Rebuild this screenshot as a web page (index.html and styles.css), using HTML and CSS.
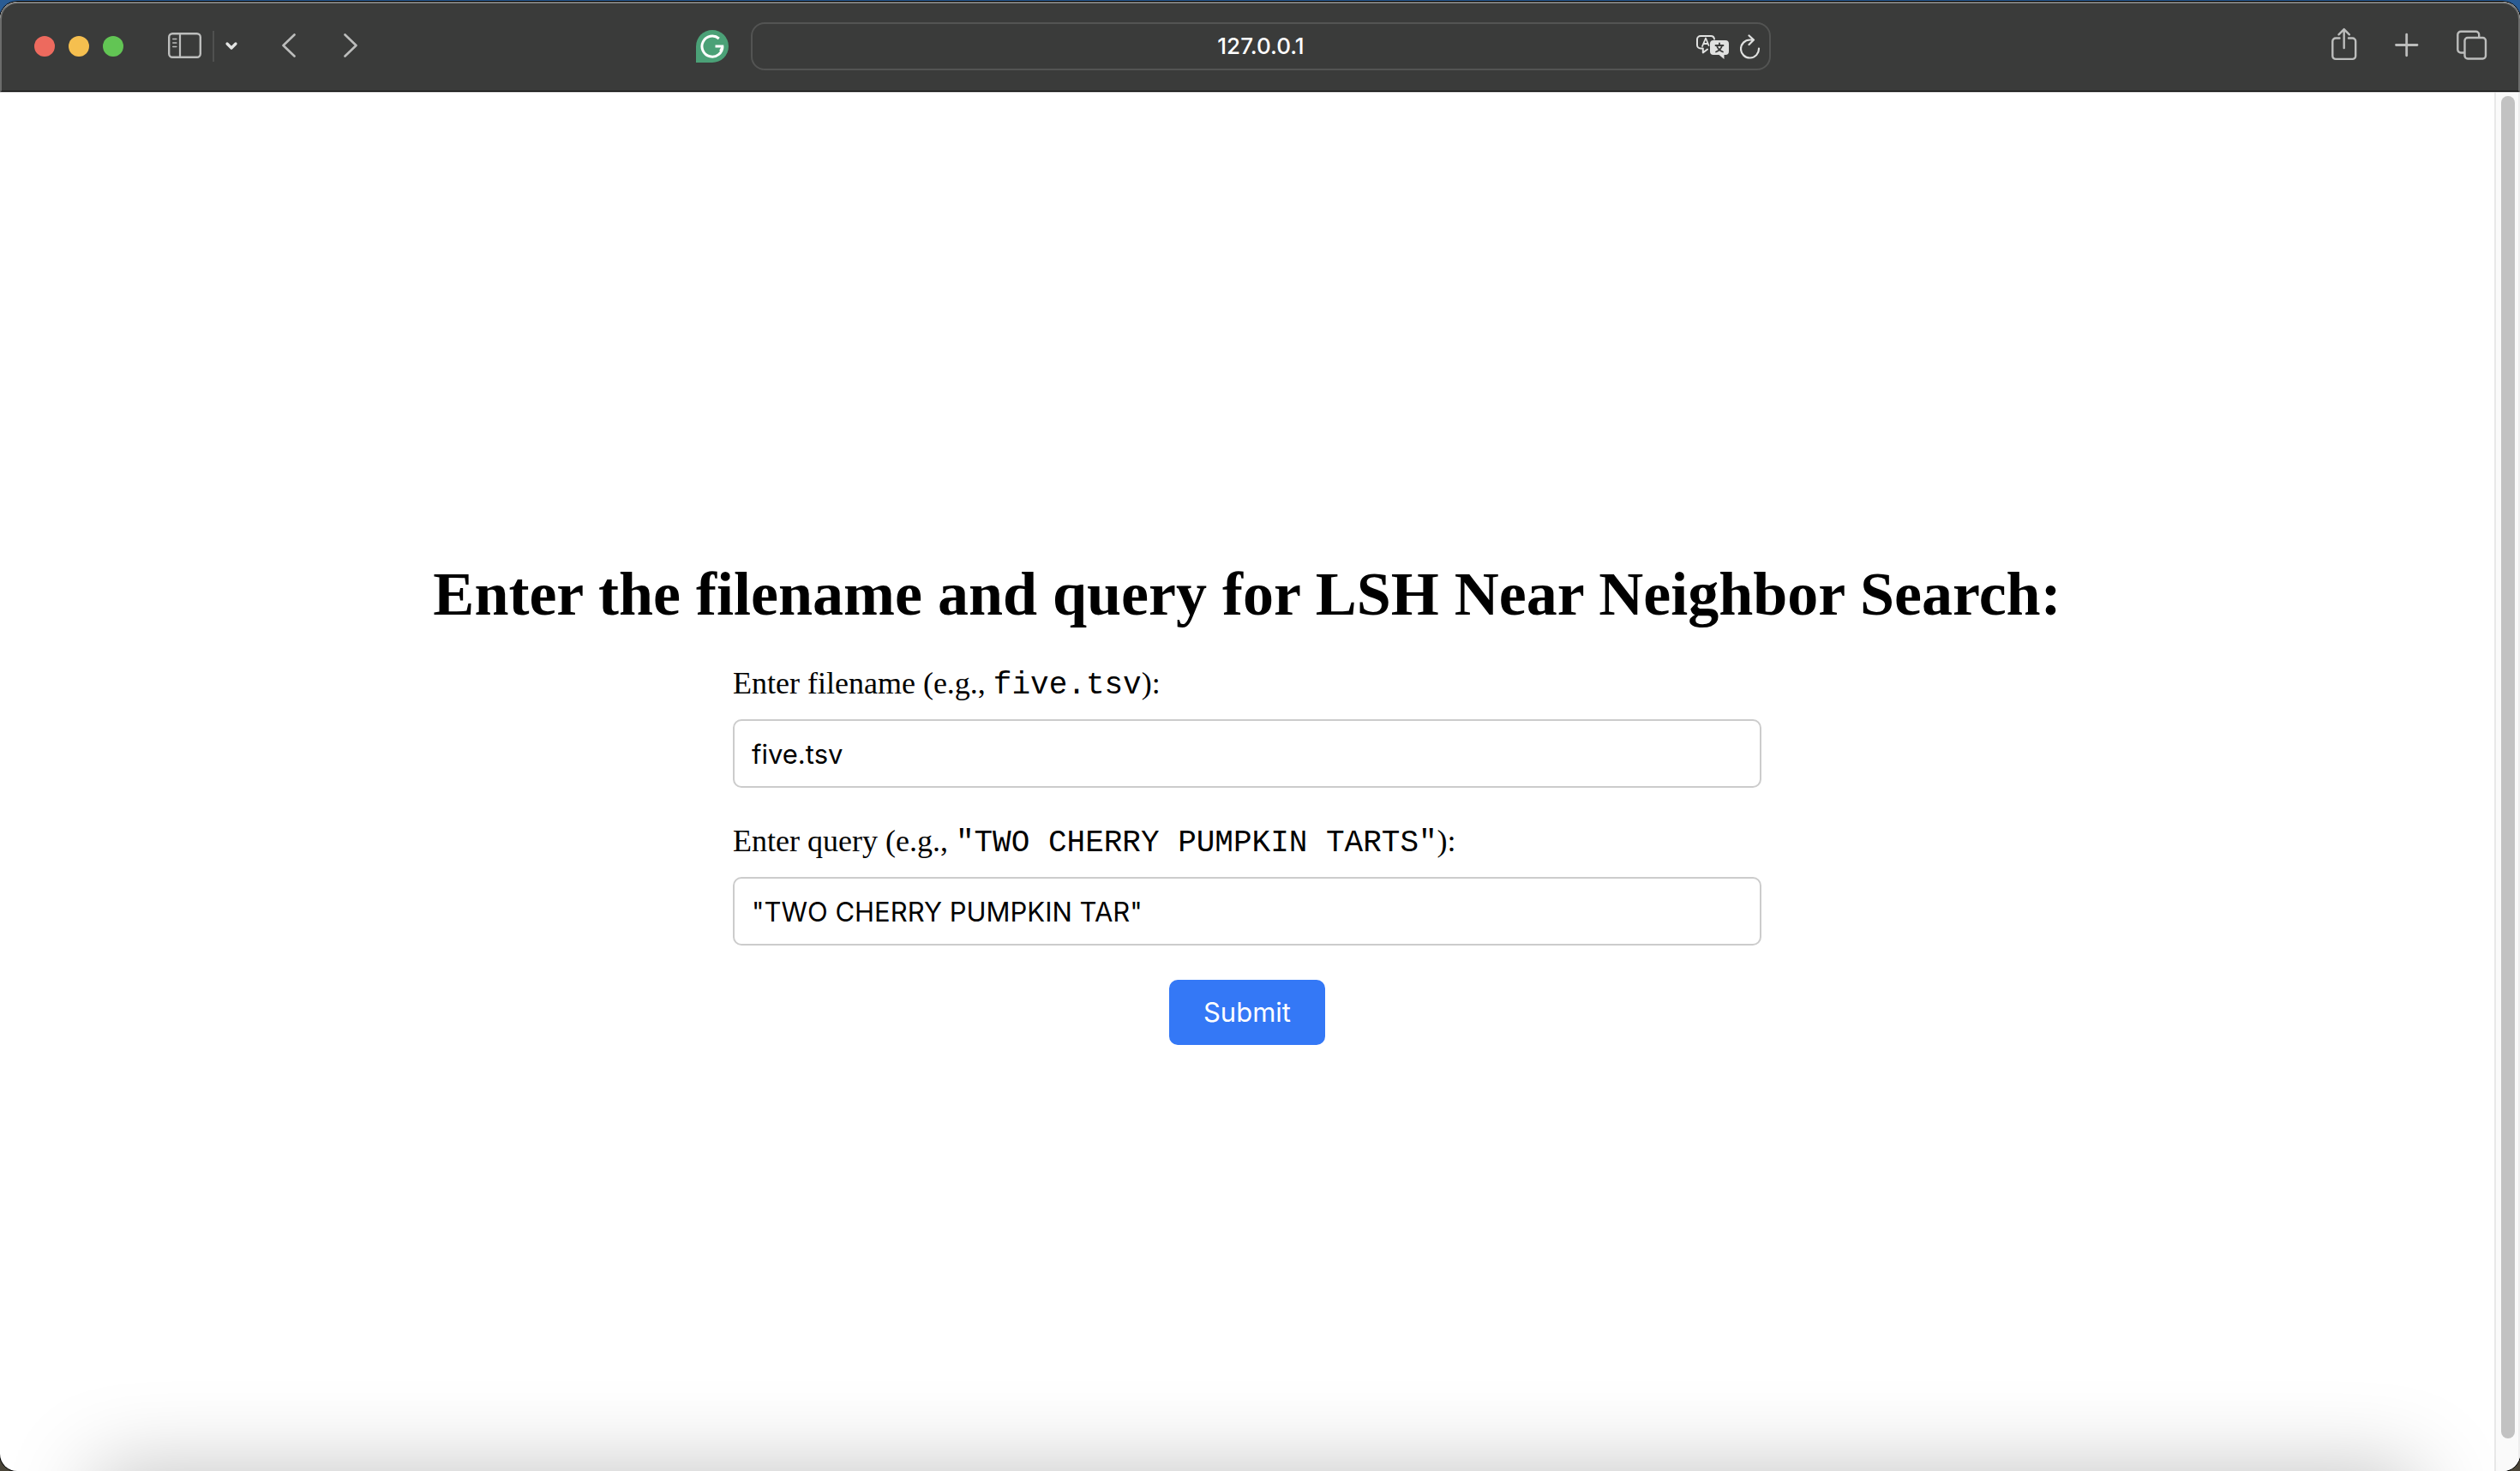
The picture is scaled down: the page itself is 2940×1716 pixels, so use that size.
FILE: index.html
```html
<!DOCTYPE html>
<html lang="en">
<head>
<meta charset="utf-8">
<title>LSH Near Neighbor Search</title>
<link rel="stylesheet" href="styles.css">
</head>
<body>
<div class="window">
  <header class="toolbar">
    <div class="toolbar-start">
      <div class="lights">
        <button class="light light-close" aria-label="Close"></button>
        <button class="light light-minimize" aria-label="Minimize"></button>
        <button class="light light-zoom" aria-label="Zoom"></button>
      </div>
      <div class="sidebar-tools">
        <button class="tool" aria-label="Show sidebar">
          <svg width="40" height="56" viewBox="0 0 40 56" fill="none" stroke="#bcbdbc" stroke-linecap="round"><rect x="1.2" y="13.2" width="36.6" height="27.6" rx="4" stroke-width="2.4"/><path d="M14 13v28" stroke-width="2.2"/><path d="M5.800 19.500h4M5.800 24h4M5.800 28.500h4" stroke-width="1.600"/></svg>
        </button>
        <span class="divider"></span>
        <button class="tool" aria-label="Tab groups">
          <svg width="16" height="56" viewBox="0 0 16 56" fill="none" stroke="#e4e5e4" stroke-width="3.200" stroke-linecap="round" stroke-linejoin="round"><path d="M3 25l5 5 5-5"/></svg>
        </button>
      </div>
      <nav class="history">
        <button class="tool" aria-label="Back">
          <svg width="16" height="56" viewBox="0 0 16 56" fill="none" stroke="#bcbdbc" stroke-width="2.600" stroke-linecap="round" stroke-linejoin="round"><path d="M14.500 14.500L1.500 27l13 12.500"/></svg>
        </button>
        <button class="tool" aria-label="Forward">
          <svg width="16" height="56" viewBox="0 0 16 56" fill="none" stroke="#bcbdbc" stroke-width="2.600" stroke-linecap="round" stroke-linejoin="round"><path d="M1.500 14.500L14.500 27l-13 12.500"/></svg>
        </button>
      </nav>
      <button class="tool tool-extension" aria-label="Grammarly">
        <svg width="38" height="56" viewBox="0 0 38 56" fill="none"><path d="M0 47V28a19 19 0 1 1 19 19z" fill="#4ba177"/><path d="M26.800 19A12 12 0 1 0 31 28.200M22.500 28h9.800" stroke="#fff" stroke-width="3"/><path d="M31 28l-3 5.500" stroke="#fff" stroke-width="2"/></svg>
      </button>
    </div>
    <div class="address">
      <span class="address-text">127.0.0.1</span>
      <div class="address-tools">
        <button class="tool" aria-label="Translate">
          <svg width="40" height="52" viewBox="0 0 40 52" fill="none" stroke-linecap="round" stroke-linejoin="round"><path d="M14 29.500l-5.200 4v-5H6a4 4 0 0 1-4-4V18a4 4 0 0 1 4-4h12a4 4 0 0 1 4 3.500" stroke="#e0e1e0" stroke-width="2"/><path d="M8 26l4-9.500 3.500 8.500M9.500 23h5" stroke="#e0e1e0" stroke-width="1.800"/><path d="M21 19h14a4 4 0 0 1 4 4v9a4 4 0 0 1-4 4h-1.500v5L27.500 36H21a4 4 0 0 1-4-4v-9a4 4 0 0 1 4-4z" fill="#e0e1e0"/><path d="M28 22.500v1.500M23.500 25h9M31 25.500c-1 3.200-3.500 5.500-7 7M25 25.500c1 3.200 3.500 5.500 7 7" stroke="#3a3b3a" stroke-width="1.800"/></svg>
        </button>
        <button class="tool" aria-label="Reload">
          <svg width="24" height="52" viewBox="0 0 24 52" fill="none" stroke="#e0e1e0" stroke-width="2.200" stroke-linecap="round" stroke-linejoin="round"><path d="M22 28.500A10.500 10.500 0 1 1 11.500 18.500h4M10.500 13.500l5.500 5-5.500 5.500"/></svg>
        </button>
      </div>
    </div>
    <div class="toolbar-end">
      <button class="tool" aria-label="Share">
        <svg width="30" height="56" viewBox="0 0 30 56" fill="none" stroke="#bcbdbc" stroke-width="2.400" stroke-linecap="round" stroke-linejoin="round"><path d="M9.500 18.500H5a3.700 3.700 0 0 0-3.700 3.700v17a3.700 3.700 0 0 0 3.700 3.700h19.500a3.700 3.700 0 0 0 3.700-3.700v-17a3.700 3.700 0 0 0-3.700-3.700H20M14.700 30V8.500M8.500 14.300l6.200-6.200 6.200 6.200"/></svg>
      </button>
      <button class="tool" aria-label="New tab">
        <svg width="28" height="56" viewBox="0 0 28 56" fill="none" stroke="#bcbdbc" stroke-width="2.800" stroke-linecap="round"><path d="M1.500 26.500h24.500M13.700 14.200v24.600"/></svg>
      </button>
      <button class="tool" aria-label="Tab overview">
        <svg width="36" height="56" viewBox="0 0 36 56" fill="none" stroke="#bcbdbc" stroke-width="2.400"><rect x="9.500" y="18" width="24.500" height="24.500" rx="3.500"/><path d="M9 35.500H5a3.700 3.700 0 0 1-3.700-3.700V14.500A3.700 3.700 0 0 1 5 10.800h17.500a3.700 3.700 0 0 1 3.700 3.700V18"/></svg>
      </button>
    </div>
  </header>
  <div class="viewport">
    <main class="page">
      <h1 class="title">Enter the filename and query for LSH Near Neighbor Search:</h1>
      <form class="search-form">
        <label class="label" for="filename">Enter filename (e.g., <code class="sample">five.tsv</code>):</label>
        <input class="field" id="filename" type="text" value="five.tsv">
        <label class="label" for="query">Enter query (e.g., <code class="sample">"TWO CHERRY PUMPKIN TARTS"</code>):</label>
        <input class="field" id="query" type="text" value="&quot;TWO CHERRY PUMPKIN TAR&quot;">
        <button class="submit" type="submit">Submit</button>
      </form>
    </main>
    <div class="scrollbar"><div class="thumb"></div></div>
  </div>
</div>
</body>
</html>
```
FILE: styles.css
```css
* {
  box-sizing: border-box;
}

body {
  margin: 0;
  min-height: 100vh;
  padding-top: 2px;
  display: flex;
  background: linear-gradient(#2a5c94, #2a5c94 50%, #4a4538 50%, #4a4538);
  color: #000;
}

button {
  margin: 0;
  padding: 0;
  border: 0;
  background: none;
}

svg {
  display: block;
}

.window {
  flex: 1;
  display: flex;
  flex-direction: column;
  overflow: hidden;
  border-radius: 20px;
  background: #fff;
  box-shadow: 0 0 0 1px #000;
}

/* Browser toolbar */

.toolbar {
  display: grid;
  grid-template-columns: 1fr minmax(0, 1190px) 1fr;
  padding: 22px 36px 24px 38px;
  background: #3a3b3a;
  border: 2px solid #6b6c6b;
  border-top-color: #7c7d7c;
  border-bottom: 1px solid #000;
  border-radius: 20px 20px 0 0;
}

.toolbar-start,
.lights,
.sidebar-tools,
.history,
.toolbar-end {
  display: flex;
  align-items: center;
}

.lights {
  gap: 16px;
}

.light {
  width: 24px;
  height: 24px;
  border-radius: 50%;
}

.light-close {
  background: #ed6a5e;
}

.light-minimize {
  background: #f5bf4f;
}

.light-zoom {
  background: #62c554;
}

.sidebar-tools {
  gap: 12px;
  margin-left: 52px;
}

.divider {
  width: 2px;
  height: 36px;
  background: #4f504f;
}

.history {
  gap: 56px;
  margin-left: 51px;
}

.tool-extension {
  margin: 0 26px 0 auto;
}

.address {
  position: relative;
  display: flex;
  align-items: center;
  justify-content: center;
  border: 2px solid #535453;
  border-radius: 16px;
}

.address-text {
  color: #fff;
  font: 500 26px/32px Inter, sans-serif;
}

.address-tools {
  position: absolute;
  right: 10px;
  display: flex;
  gap: 12px;
}

.toolbar-end {
  justify-content: flex-end;
  gap: 44px;
}

/* Web page */

.viewport {
  position: relative;
  flex: 1;
  display: flex;
  border-top: 1px solid #b8b8b8;
}

.viewport::after {
  content: "";
  position: absolute;
  top: 100%;
  left: 110px;
  right: 120px;
  height: 100px;
  box-shadow: 0 0 100px rgba(0, 0, 0, 0.25);
  pointer-events: none;
}

.page {
  flex: 1;
  display: flex;
  flex-direction: column;
  align-items: center;
  justify-content: center;
}

.title {
  margin: 46px 0 40px;
  font: bold 72px/84px "Liberation Serif", serif;
}

.search-form {
  display: flex;
  flex-direction: column;
  width: 1200px;
  max-width: 100%;
}

.label {
  margin-bottom: 20px;
  font: 36px/44px "Liberation Serif", serif;
}

.sample {
  font: 36px/36px "Liberation Mono", monospace;
}

.field {
  height: 80px;
  margin-bottom: 40px;
  padding: 0 20px;
  border: 2px solid #ccc;
  border-radius: 10px;
  background: #fff;
  color: #000;
  font: 31px Inter, sans-serif;
}

.submit {
  align-self: center;
  padding: 18px 40px;
  border-radius: 10px;
  background: #3478f6;
  color: #fff;
  font: 31px/40px Inter, sans-serif;
}

.scrollbar {
  width: 30px;
  padding: 4px 4px 38px 6px;
  background: #fafafa;
  border-left: 2px solid #e8e8e8;
  border-right: 2px solid #ededed;
}

.thumb {
  height: 100%;
  border-radius: 8px;
  background: #c2c2c2;
}
```
